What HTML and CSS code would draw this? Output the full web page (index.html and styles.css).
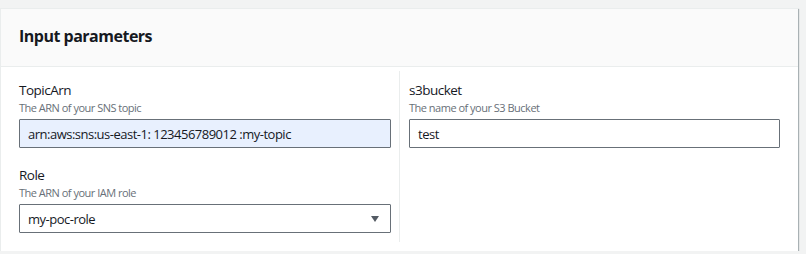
FILE: index.html
```html
<!DOCTYPE html>
<html lang="en">
<head>
  <meta charset="UTF-8" />
  <title>Input parameters</title>
  <link rel="stylesheet" href="styles.css">
</head>
<body>
  <div class="panel">
    <div class="panel-header">
      <h2>Input parameters</h2>
    </div>
    <div class="panel-body">
      <div class="column">
        <div class="field">
          <div class="field-label">TopicArn</div>
          <div class="field-desc">The ARN of your SNS topic</div>
          <div class="input autofill">arn:aws:sns:us-east-1: 123456789012 :my-topic</div>
        </div>
        <div class="field">
          <div class="field-label">Role</div>
          <div class="field-desc">The ARN of your IAM role</div>
          <div class="input select">
            <span>my-poc-role</span>
            <svg class="caret" viewBox="0 0 8 6" width="8" height="6"><path d="M0 0h8L4 6z"/></svg>
          </div>
        </div>
      </div>
      <div class="column column-right">
        <div class="field">
          <div class="field-label">s3bucket</div>
          <div class="field-desc">The name of your S3 Bucket</div>
          <div class="input">test</div>
        </div>
      </div>
    </div>
  </div>
</body>
</html>
```

FILE: styles.css
```css
* {
  margin: 0;
  padding: 0;
  box-sizing: border-box;
}
body {
  background-color: #f2f3f3;
  font-family: 'Open Sans', 'Noto Sans', Arial, sans-serif;
  color: #16191f;
  padding: 8px 8px 0 0;
}

/* Panel */
.panel {
  width: 798px;
  height: 243px;
  background: #fff;
  border-left: 1px solid #eaeded;
  border-top: 1px solid #eaeded;
  box-shadow: 1px 1px 1px rgba(0,28,36,0.3);
}
.panel-header {
  height: 58px;
  background: #fafafa;
  border-bottom: 1px solid #eaeded;
  padding: 0 18px 4px;
  display: flex;
  align-items: center;
}
.panel-header h2 {
  font-size: 16px;
  font-weight: 700;
  letter-spacing: -0.5px;
}

/* Columns */
.panel-body {
  display: flex;
  padding: 4px 0 9px;
  height: 184px;
}
.column {
  width: 398px;
  padding: 9px 8px 0 18px;
  display: flex;
  flex-direction: column;
  gap: 17px;
}
.column-right {
  width: 399px;
  border-left: 1px solid #eaeded;
  padding: 9px 18px 0 9px;
}

/* Fields */
.field-label {
  font-size: 13.5px;
  line-height: 20px;
  letter-spacing: -0.5px;
}
.field-desc {
  font-size: 11px;
  line-height: 16px;
  color: #687078;
  letter-spacing: -0.5px;
  margin-bottom: 3px;
}
.input {
  height: 29px;
  border: 1px solid #687078;
  border-radius: 1px;
  padding: 0 8px;
  font-size: 13px;
  letter-spacing: -0.5px;
  display: flex;
  align-items: center;
  background: #fff;
}
.autofill {
  background: #e8f0fe;
}
.select {
  justify-content: space-between;
  padding-right: 11px;
}
.caret {
  fill: #545b64;
}
```
